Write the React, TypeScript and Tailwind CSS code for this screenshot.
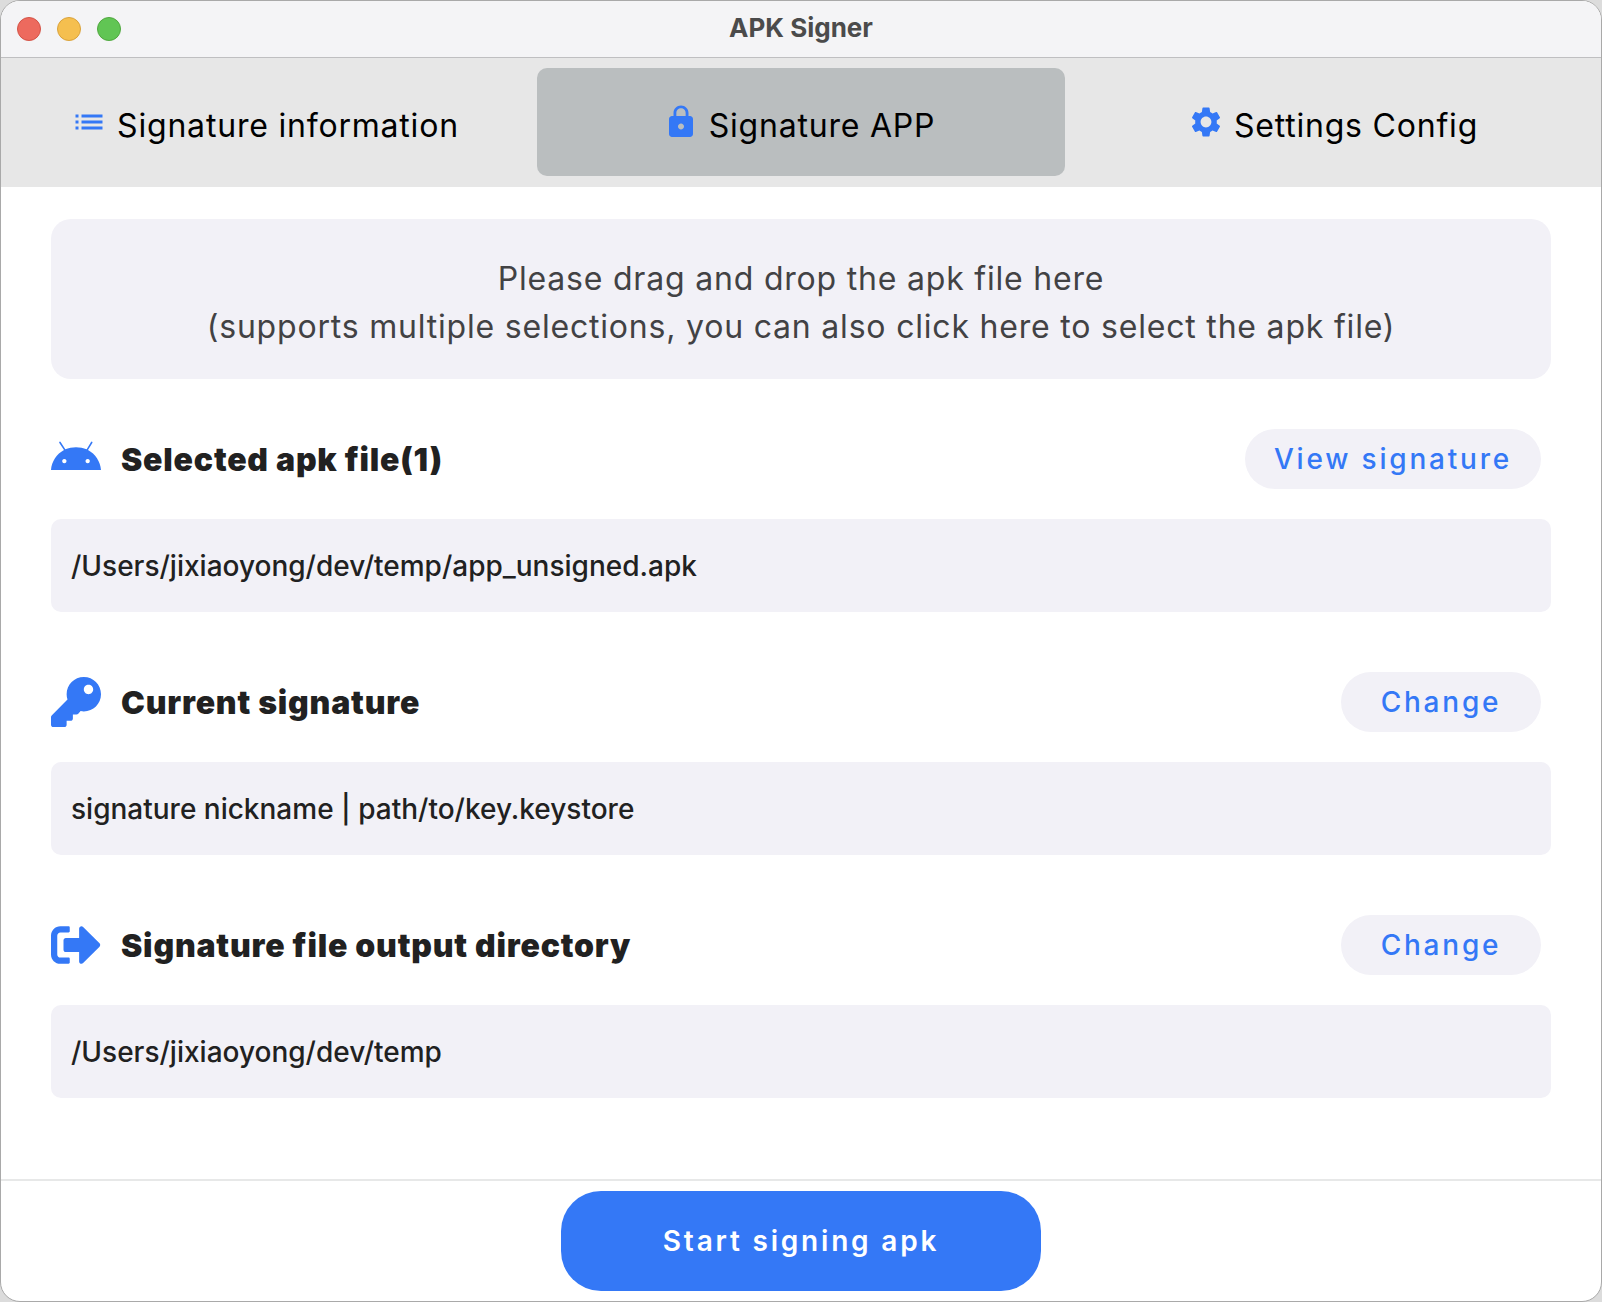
import { FaKey, FaSignOutAlt } from "react-icons/fa";
import { MdList, MdLock, MdSettings } from "react-icons/md";
import type { ReactNode } from "react";

function AndroidHead() {
  return (
    <svg viewBox="0 6 150 150" className="size-[50px] shrink-0 text-[#3478f6]" aria-hidden="true">
      <path
        fill="currentColor"
        fillRule="evenodd"
        d="M0 114C2 88 17 66 39 54L25 33a2 2 0 0 1 4-3L43 52C62 44 88 44 107 52L120 30a2 2 0 0 1 4 3L111 54C133 66 148 88 150 114ZM40 81a6.500 6.500 0 1 0 .01 0ZM110 81a6.500 6.500 0 1 0 .01 0Z"
      />
    </svg>
  );
}

function Tab({ icon, label, active }: { icon: ReactNode; label: string; active?: boolean }) {
  return (
    <button
      type="button"
      role="tab"
      aria-selected={!!active}
      className={`flex h-27 items-center justify-center gap-2.5 rounded-[10px] pr-1 text-[32px] leading-12 tracking-wide text-black ${active ? "bg-[#babebf]" : ""}`}
    >
      <span className="text-[#3478f6]">{icon}</span>
      <span className="pt-2">{label}</span>
    </button>
  );
}

function Section({ icon, title, action, value, wide }: { icon: ReactNode; title: string; action: string; value: string; wide?: boolean }) {
  return (
    <section>
      <div className="flex h-15 items-center gap-5 pr-2.5">
        {icon}
        <h2 className="flex-1 pt-0.5 text-[32px] leading-10 font-black tracking-wide text-[#212121]">{title}</h2>
        <button
          type="button"
          className={`h-15 rounded-full bg-[#f2f1f7] text-[28px] font-medium tracking-widest text-[#3478f6] ${wide ? "w-74" : "w-50"}`}
        >
          {action}
        </button>
      </div>
      <p className="mt-[30px] rounded-[10px] bg-[#f2f1f7] px-5 pt-[25px] pb-[23px] text-[28px] leading-[45px] font-medium text-[#212121]">{value}</p>
    </section>
  );
}

export default function App() {
  return (
    <div className="min-h-screen bg-[#dcdcdc] font-['Inter',sans-serif]">
      <div className="flex min-h-screen flex-col overflow-hidden rounded-[20px] border border-[#a9a9a9] bg-white">
        <header className="grid h-[57px] grid-cols-[1fr_auto_1fr] items-center border-b border-[#bfbfc1] bg-[#f4f4f6] px-4">
          <div className="flex gap-4">
            <button type="button" aria-label="Close" className="size-6 rounded-full border border-[#d35347] bg-[#ed6a5e]" />
            <button type="button" aria-label="Minimize" className="size-6 rounded-full border border-[#d9a23c] bg-[#f5bf4f]" />
            <button type="button" aria-label="Zoom" className="size-6 rounded-full border border-[#50a73f] bg-[#61c554]" />
          </div>
          <h1 className="pb-0.5 text-[26px] leading-8 font-bold text-[#4b4b4b]">APK Signer</h1>
        </header>
        <nav role="tablist" className="grid grid-cols-3 gap-1.5 bg-[#e7e7e7] px-0.5 pt-2.5 pb-[11px]">
          <Tab icon={<MdList size={36} />} label="Signature information" />
          <Tab active icon={<MdLock size={36} />} label="Signature APP" />
          <Tab icon={<MdSettings size={36} />} label="Settings Config" />
        </nav>
        <main className="flex flex-1 flex-col px-[50px] pt-8">
          <button type="button" className="h-40 rounded-[20px] bg-[#f2f1f7] pt-2 text-[32px] leading-12 tracking-wide text-[#424244]">
            Please drag and drop the apk file here
            <br />
            (supports multiple selections, you can also click here to select the apk file)
          </button>
          <div className="mt-[50px] flex flex-col gap-15">
            <Section wide icon={<AndroidHead />} title="Selected apk file(1)" action="View signature" value="/Users/jixiaoyong/dev/temp/app_unsigned.apk" />
            <Section icon={<FaKey size={50} color="#3478f6" />} title="Current signature" action="Change" value="signature nickname | path/to/key.keystore" />
            <Section icon={<FaSignOutAlt size={50} color="#3478f6" />} title="Signature file output directory" action="Change" value="/Users/jixiaoyong/dev/temp" />
          </div>
        </main>
        <footer className="flex justify-center border-t-2 border-[#e7e8e8] py-2.5">
          <button type="button" className="h-25 w-120 rounded-[40px] bg-[#3478f6] text-[28px] font-semibold tracking-widest text-white">
            Start signing apk
          </button>
        </footer>
      </div>
    </div>
  );
}
